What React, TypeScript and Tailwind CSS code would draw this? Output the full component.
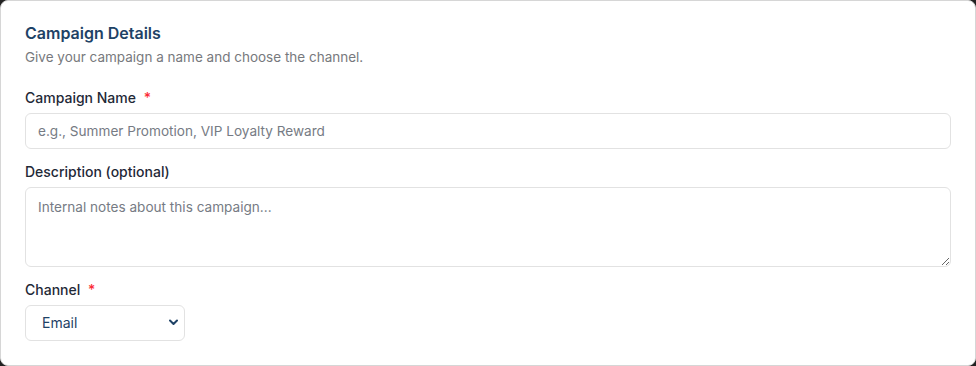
import React, { useState } from 'react';

const CampaignDetails: React.FC = () => {
  const [formData, setFormData] = useState({
    name: '',
    description: '',
    channel: 'Email',
  });

  const handleChange = (e: React.ChangeEvent<HTMLInputElement | HTMLTextAreaElement | HTMLSelectElement>) => {
    setFormData({ ...formData, [e.target.name]: e.target.value });
  };

  const labelClasses = "block text-sm leading-5 font-medium text-[#1f2937] mb-[5px]";
  const inputClasses = "w-full bg-white border border-[#e2e2e2] rounded-md px-3 text-[13.6px] text-[#1f2937] placeholder-[#767b84] focus:outline-none focus:ring-2 focus:ring-blue-500";
  const channels = ['Email', 'SMS', 'Push Notification'];

  return (
    <div className="w-[976px] h-[366px] bg-[#222222]" style={{ fontFamily: 'Inter, "Noto Sans", sans-serif' }}>
      <section className="h-full bg-white border border-[#d6d6d6] rounded-lg px-6 pt-5" aria-labelledby="campaign-details-heading">
        <h2 id="campaign-details-heading" className="text-base leading-6 font-semibold text-[#1e4266]">
          Campaign Details
        </h2>
        <p className="text-[13.5px] leading-5 text-[#77797d] mt-0.5 mb-[21px]">
          Give your campaign a name and choose the channel.
        </p>

        <div className="flex flex-col gap-[13px]">
          <div>
            <label htmlFor="name" className={labelClasses}>
              Campaign Name <span className="text-red-500 ml-1">*</span>
            </label>
            <input
              type="text"
              name="name"
              id="name"
              value={formData.name}
              onChange={handleChange}
              className={`${inputClasses} h-9 pl-[12px]`}
              placeholder="e.g., Summer Promotion, VIP Loyalty Reward"
            />
          </div>

          <div>
            <label htmlFor="description" className={labelClasses}>Description (optional)</label>
            <textarea
              name="description"
              id="description"
              value={formData.description}
              onChange={handleChange}
              className={`${inputClasses} h-20 py-[9px] pl-[12px] block`}
              placeholder="Internal notes about this campaign..."
            />
          </div>

          <div>
            <label htmlFor="channel" className={labelClasses}>
              Channel <span className="text-red-500 ml-1">*</span>
            </label>
            <div className="relative w-[160px]">
              <select
                name="channel"
                id="channel"
                value={formData.channel}
                onChange={handleChange}
                className="appearance-none w-full h-9 bg-white border border-[#e2e2e2] rounded-md pl-4 pr-8 text-sm text-[#1e4266] focus:outline-none"
              >
                {channels.map(c => <option key={c} value={c}>{c}</option>)}
              </select>
              <svg className="pointer-events-none absolute right-[7px] top-[14px] w-[9px] h-[7px] text-[#1e4266]" viewBox="0 0 9 7" fill="none" stroke="currentColor">
                <path d="M1 1.5l3.5 3.5L8 1.5" strokeWidth={2} strokeLinecap="round" strokeLinejoin="round" />
              </svg>
            </div>
          </div>
        </div>
      </section>
    </div>
  );
};

export default CampaignDetails;
